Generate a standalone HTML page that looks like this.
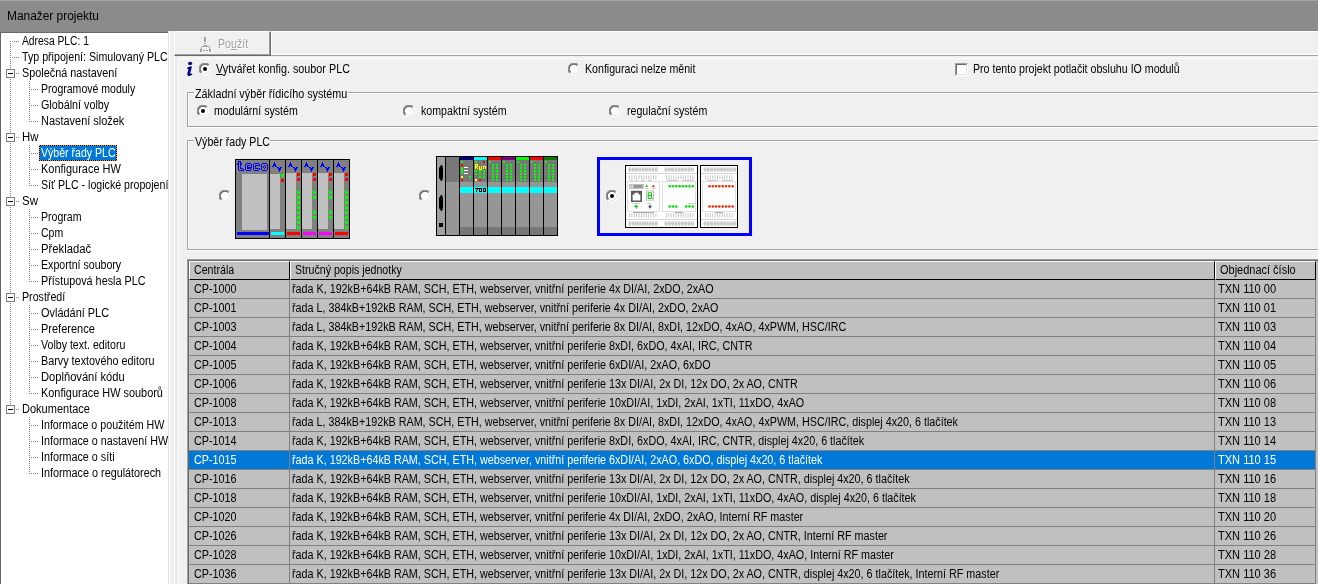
<!DOCTYPE html>
<html><head><meta charset="utf-8"><title>Manažer projektu</title>
<style>
html,body{margin:0;padding:0;}
body{width:1318px;height:584px;overflow:hidden;background:#f0f0f0;position:relative;font-family:"Liberation Sans",sans-serif;font-size:12px;color:#000;}
.a{position:absolute;}
.t{position:absolute;white-space:nowrap;line-height:13px;height:13px;transform:scaleX(0.885);transform-origin:0 0;}
#title{left:0;top:0;width:1318px;height:31px;background:#8b8b8b;}
#title .cap{position:absolute;left:7px;top:9px;font-size:12px;line-height:14px;letter-spacing:0;white-space:nowrap;transform:scaleX(0.992);transform-origin:0 0;}
#tree{left:0;top:32px;width:167px;height:552px;background:#fff;border-left:1px solid #646464;border-top:1px solid #696969;overflow:hidden;}
.dv{position:absolute;width:1px;background:repeating-linear-gradient(to bottom,#808080 0,#808080 1px,transparent 1px,transparent 2px);}
.dh{position:absolute;height:1px;background:repeating-linear-gradient(to right,#808080 0,#808080 1px,transparent 1px,transparent 2px);}
.box{position:absolute;width:7px;height:7px;border:1px solid #808080;background:#fff;}
.box i{position:absolute;left:1px;top:3px;width:5px;height:1px;background:#000;}
.s90{transform:scaleX(0.899)}.s92{transform:scaleX(0.90)}.s93{transform:scaleX(0.92)}.s915{transform:scaleX(0.915)}.s897{transform:scaleX(0.896)}
.hl{position:absolute;height:1px;}
.vl{position:absolute;width:1px;}
.radio{position:absolute;width:12px;height:12px;}
#grid{left:187px;top:259px;width:1131px;height:325px;background:#c0c0c0;overflow:hidden;}
.gh{position:absolute;top:2px;height:19px;background:#c0c0c0;border-left:1px solid #fff;border-top:1px solid #fff;border-right:1px solid #000;border-bottom:1px solid #000;box-sizing:border-box;}
.row{position:absolute;left:2px;width:1127px;height:18px;border-bottom:1px solid #808080;}
.row.sel{background:#0078d7;color:#fff;}
.c{position:absolute;top:0;height:18px;border-right:1px solid #808080;}
.row .t{top:3px;}
</style></head><body>

<div id="title" class="a"><div class="a" style="left:0;top:0;width:1318px;height:1px;background:#a3a3a3"></div><div class="cap">Manažer projektu</div></div>
<div class="a" style="left:0;top:31px;width:168px;height:1px;background:#8b8b8b"></div>
<div id="tree" class="a">
<div class="dv" style="left:9px;top:8px;height:369px"></div>
<div class="dh" style="left:11px;top:8px;width:7px"></div>
<div class="t" style="left:21px;top:2px;transform:scaleX(0.8581)">Adresa PLC: 1</div>
<div class="dh" style="left:11px;top:24px;width:7px"></div>
<div class="t" style="left:21px;top:18px;transform:scaleX(0.8881)">Typ připojení: Simulovaný PLC</div>
<div class="dh" style="left:15px;top:40px;width:4px"></div>
<div class="box" style="left:5px;top:36px"><i></i></div>
<div class="t" style="left:21px;top:34px;transform:scaleX(0.9033)">Společná nastavení</div>
<div class="dh" style="left:30px;top:56px;width:7px"></div>
<div class="t" style="left:40px;top:50px;transform:scaleX(0.8775)">Programové moduly</div>
<div class="dh" style="left:30px;top:72px;width:7px"></div>
<div class="t" style="left:40px;top:66px;transform:scaleX(0.897)">Globální volby</div>
<div class="dh" style="left:30px;top:88px;width:7px"></div>
<div class="t" style="left:40px;top:82px;transform:scaleX(0.9119)">Nastavení složek</div>
<div class="dh" style="left:15px;top:104px;width:4px"></div>
<div class="box" style="left:5px;top:100px"><i></i></div>
<div class="t" style="left:21px;top:98px;transform:scaleX(0.947)">Hw</div>
<div class="dh" style="left:30px;top:120px;width:7px"></div>
<div class="a" style="left:38px;top:112px;width:78px;height:16px;background:#0078d7"><div class="a" style="left:0;top:0;width:78px;height:1px;background:repeating-linear-gradient(90deg,#ff8728 0 1px,#000 1px 2px)"></div><div class="a" style="left:0;top:15px;width:78px;height:1px;background:repeating-linear-gradient(90deg,#000 0 1px,#ff8728 1px 2px)"></div><div class="a" style="left:0;top:0;width:1px;height:16px;background:repeating-linear-gradient(180deg,#ff8728 0 1px,#000 1px 2px)"></div><div class="a" style="left:77px;top:0;width:1px;height:16px;background:repeating-linear-gradient(180deg,#000 0 1px,#ff8728 1px 2px)"></div></div>
<div class="t" style="left:40px;top:114px;color:#fff;transform:scaleX(0.881)">Výběr řady PLC</div>
<div class="dh" style="left:30px;top:136px;width:7px"></div>
<div class="t" style="left:40px;top:130px;transform:scaleX(0.913)">Konfigurace HW</div>
<div class="dh" style="left:30px;top:152px;width:7px"></div>
<div class="t" style="left:40px;top:146px;transform:scaleX(0.885)">Síť PLC - logické propojení</div>
<div class="dh" style="left:15px;top:168px;width:4px"></div>
<div class="box" style="left:5px;top:164px"><i></i></div>
<div class="t" style="left:21px;top:162px;transform:scaleX(0.9558)">Sw</div>
<div class="dh" style="left:30px;top:184px;width:7px"></div>
<div class="t" style="left:40px;top:178px;transform:scaleX(0.8805)">Program</div>
<div class="dh" style="left:30px;top:200px;width:7px"></div>
<div class="t" style="left:40px;top:194px;transform:scaleX(0.8766)">Cpm</div>
<div class="dh" style="left:30px;top:216px;width:7px"></div>
<div class="t" style="left:40px;top:210px;transform:scaleX(0.9389)">Překladač</div>
<div class="dh" style="left:30px;top:232px;width:7px"></div>
<div class="t" style="left:40px;top:226px;transform:scaleX(0.8838)">Exportní soubory</div>
<div class="dh" style="left:30px;top:248px;width:7px"></div>
<div class="t" style="left:40px;top:242px;transform:scaleX(0.8999)">Přístupová hesla PLC</div>
<div class="dh" style="left:15px;top:264px;width:4px"></div>
<div class="box" style="left:5px;top:260px"><i></i></div>
<div class="t" style="left:21px;top:258px;transform:scaleX(0.8871)">Prostředí</div>
<div class="dh" style="left:30px;top:280px;width:7px"></div>
<div class="t" style="left:40px;top:274px;transform:scaleX(0.9113)">Ovládání PLC</div>
<div class="dh" style="left:30px;top:296px;width:7px"></div>
<div class="t" style="left:40px;top:290px;transform:scaleX(0.9169)">Preference</div>
<div class="dh" style="left:30px;top:312px;width:7px"></div>
<div class="t" style="left:40px;top:306px;transform:scaleX(0.8839)">Volby text. editoru</div>
<div class="dh" style="left:30px;top:328px;width:7px"></div>
<div class="t" style="left:40px;top:322px;transform:scaleX(0.9003)">Barvy textového editoru</div>
<div class="dh" style="left:30px;top:344px;width:7px"></div>
<div class="t" style="left:40px;top:338px;transform:scaleX(0.9293)">Doplňování kódu</div>
<div class="dh" style="left:30px;top:360px;width:7px"></div>
<div class="t" style="left:40px;top:354px;transform:scaleX(0.9092)">Konfigurace HW souborů</div>
<div class="dh" style="left:15px;top:376px;width:4px"></div>
<div class="box" style="left:5px;top:372px"><i></i></div>
<div class="t" style="left:21px;top:370px;transform:scaleX(0.9182)">Dokumentace</div>
<div class="dh" style="left:30px;top:392px;width:7px"></div>
<div class="t" style="left:40px;top:386px;transform:scaleX(0.8886)">Informace o použitém HW</div>
<div class="dh" style="left:30px;top:408px;width:7px"></div>
<div class="t" style="left:40px;top:402px;transform:scaleX(0.8949)">Informace o nastavení HW</div>
<div class="dh" style="left:30px;top:424px;width:7px"></div>
<div class="t" style="left:40px;top:418px;transform:scaleX(0.8962)">Informace o síti</div>
<div class="dh" style="left:30px;top:440px;width:7px"></div>
<div class="t" style="left:40px;top:434px;transform:scaleX(0.9002)">Informace o regulátorech</div>
<div class="dv" style="left:28px;top:48px;height:41px"></div>
<div class="dv" style="left:28px;top:112px;height:41px"></div>
<div class="dv" style="left:28px;top:176px;height:73px"></div>
<div class="dv" style="left:28px;top:272px;height:89px"></div>
<div class="dv" style="left:28px;top:384px;height:57px"></div>
</div>
<div class="a" style="left:168px;top:31px;width:1px;height:553px;background:#e3e3e3"></div>
<div class="a" style="left:169px;top:31px;width:1px;height:553px;background:#fff"></div>
<div class="a" style="left:174px;top:31px;width:97px;height:25px;box-sizing:border-box;border-left:1px solid #fff;border-top:1px solid #fff;border-right:1px solid #696969;border-bottom:1px solid #696969;background:#f0f0f0"><div class="a" style="left:0;top:0;width:94px;height:22px;border-right:1px solid #a0a0a0;border-bottom:1px solid #a0a0a0"></div></div>
<svg class="a" style="left:199px;top:36px" width="14" height="18" viewBox="0 0 14 18" shape-rendering="crispEdges"><g fill="#fff" transform="translate(1,1)"><rect x="5" y="1" width="2" height="5"/><rect x="5" y="7" width="2" height="1"/><rect x="5" y="9" width="3" height="1"/><rect x="3" y="10" width="7" height="1"/><rect x="2" y="11" width="1" height="2"/><rect x="10" y="11" width="1" height="2"/><rect x="1" y="13" width="2" height="3"/><rect x="10" y="13" width="2" height="3"/><rect x="4" y="14" width="2" height="1"/><rect x="7" y="14" width="2" height="1"/></g><g fill="#a0a0a0"><rect x="5" y="1" width="2" height="5"/><rect x="5" y="7" width="2" height="1"/><rect x="5" y="9" width="3" height="1"/><rect x="3" y="10" width="7" height="1"/><rect x="2" y="11" width="1" height="2"/><rect x="10" y="11" width="1" height="2"/><rect x="1" y="13" width="2" height="3"/><rect x="10" y="13" width="2" height="3"/><rect x="4" y="14" width="2" height="1"/><rect x="7" y="14" width="2" height="1"/></g></svg>
<div class="t" style="left:218px;top:38px;color:#a0a0a0;text-shadow:1px 1px 0 #fff">Po<u>u</u>žít</div>
<div class="hl" style="left:271px;top:55px;width:1047px;background:#a0a0a0"></div>
<div class="hl" style="left:271px;top:54px;width:1047px;background:#fff"></div>
<div class="vl" style="left:271px;top:31px;height:24px;background:#fff"></div>
<div class="hl" style="left:271px;top:31px;width:1047px;background:#fff"></div>
<div class="hl" style="left:178px;top:58px;width:1140px;background:#fff"></div>
<div class="vl" style="left:174px;top:56px;height:528px;background:#fff"></div>
<div class="a" style="left:175px;top:56px;width:3px;height:528px;background:#ececec"></div>
<div class="vl" style="left:178px;top:58px;height:526px;background:#fff"></div>
<svg class="a" style="left:185px;top:60px" width="10" height="18" viewBox="185 60 10 18"><ellipse cx="190.1" cy="63.4" rx="2.1" ry="1.55" fill="#000080"/><path d="M186.9 68.3 C187.6 66.9 189.6 66.4 192.0 66.6 L190.3 72.8 C190.1 73.9 190.7 74.2 192.1 73.3 L192.3 74.3 C191.0 76.1 188.0 76.7 187.4 74.7 C187.1 73.6 187.6 72.6 188.2 70.6 C188.6 69.2 188.5 68.3 187.0 68.8 Z" fill="#000080"/></svg>
<svg class="radio" style="left:199px;top:63px" viewBox="0 0 12 12"><circle cx="6" cy="6" r="5.5" fill="#fff"/><path d="M1.9 10.1 A5.5 5.5 0 0 1 10.1 1.9" fill="none" stroke="#8c8c8c" stroke-width="1.1"/><path d="M2.7 9.3 A4.5 4.5 0 0 1 9.3 2.7" fill="none" stroke="#5a5a5a" stroke-width="1.1"/><path d="M10.1 1.9 A5.5 5.5 0 0 1 1.9 10.1" fill="none" stroke="#fff" stroke-width="1"/><path d="M9.3 2.7 A4.5 4.5 0 0 1 2.7 9.3" fill="none" stroke="#e3e3e3" stroke-width="1"/><circle cx="6" cy="6" r="2" fill="#000"/></svg>
<div class="t s90" style="left:216px;top:63px"><u>V</u>ytvářet konfig. soubor PLC</div>
<svg class="radio" style="left:568px;top:63px" viewBox="0 0 12 12"><circle cx="6" cy="6" r="5.5" fill="#fff"/><path d="M1.9 10.1 A5.5 5.5 0 0 1 10.1 1.9" fill="none" stroke="#8c8c8c" stroke-width="1.1"/><path d="M2.7 9.3 A4.5 4.5 0 0 1 9.3 2.7" fill="none" stroke="#5a5a5a" stroke-width="1.1"/><path d="M10.1 1.9 A5.5 5.5 0 0 1 1.9 10.1" fill="none" stroke="#fff" stroke-width="1"/><path d="M9.3 2.7 A4.5 4.5 0 0 1 2.7 9.3" fill="none" stroke="#e3e3e3" stroke-width="1"/></svg>
<div class="t" style="left:585px;top:63px">Konfiguraci nelze měnit</div>
<div class="a" style="left:955px;top:63px;width:13px;height:13px;box-sizing:border-box;background:#fff;border-left:1px solid #a0a0a0;border-top:1px solid #a0a0a0;border-right:1px solid #fff;border-bottom:1px solid #fff"><div class="a" style="left:0;top:0;width:9px;height:9px;border-left:1px solid #696969;border-top:1px solid #696969;border-right:1px solid #e3e3e3;border-bottom:1px solid #e3e3e3"></div></div>
<div class="t" style="left:973px;top:63px">Pro tento projekt potlačit obsluhu IO modulů</div>
<div class="a" style="left:187px;top:92px;width:1133px;height:35px;box-sizing:border-box;border:1px solid #a0a0a0;border-right:none"></div><div class="a" style="left:188px;top:93px;width:1131px;height:33px;box-sizing:border-box;border:1px solid #fff;border-right:none;border-bottom:none"></div><div class="hl" style="left:187px;top:127px;width:1131px;background:#fff"></div><div class="a" style="left:194px;top:86px;width:154px;height:13px;background:#f0f0f0"></div><div class="t s90" style="left:195px;top:88px">Základní výběr řídicího systému</div>
<svg class="radio" style="left:197px;top:105px" viewBox="0 0 12 12"><circle cx="6" cy="6" r="5.5" fill="#fff"/><path d="M1.9 10.1 A5.5 5.5 0 0 1 10.1 1.9" fill="none" stroke="#8c8c8c" stroke-width="1.1"/><path d="M2.7 9.3 A4.5 4.5 0 0 1 9.3 2.7" fill="none" stroke="#5a5a5a" stroke-width="1.1"/><path d="M10.1 1.9 A5.5 5.5 0 0 1 1.9 10.1" fill="none" stroke="#fff" stroke-width="1"/><path d="M9.3 2.7 A4.5 4.5 0 0 1 2.7 9.3" fill="none" stroke="#e3e3e3" stroke-width="1"/><circle cx="6" cy="6" r="2" fill="#000"/></svg>
<div class="t" style="left:214px;top:105px">modulární systém</div>
<svg class="radio" style="left:403px;top:105px" viewBox="0 0 12 12"><circle cx="6" cy="6" r="5.5" fill="#fff"/><path d="M1.9 10.1 A5.5 5.5 0 0 1 10.1 1.9" fill="none" stroke="#8c8c8c" stroke-width="1.1"/><path d="M2.7 9.3 A4.5 4.5 0 0 1 9.3 2.7" fill="none" stroke="#5a5a5a" stroke-width="1.1"/><path d="M10.1 1.9 A5.5 5.5 0 0 1 1.9 10.1" fill="none" stroke="#fff" stroke-width="1"/><path d="M9.3 2.7 A4.5 4.5 0 0 1 2.7 9.3" fill="none" stroke="#e3e3e3" stroke-width="1"/></svg>
<div class="t" style="left:421px;top:105px">kompaktní systém</div>
<svg class="radio" style="left:609px;top:105px" viewBox="0 0 12 12"><circle cx="6" cy="6" r="5.5" fill="#fff"/><path d="M1.9 10.1 A5.5 5.5 0 0 1 10.1 1.9" fill="none" stroke="#8c8c8c" stroke-width="1.1"/><path d="M2.7 9.3 A4.5 4.5 0 0 1 9.3 2.7" fill="none" stroke="#5a5a5a" stroke-width="1.1"/><path d="M10.1 1.9 A5.5 5.5 0 0 1 1.9 10.1" fill="none" stroke="#fff" stroke-width="1"/><path d="M9.3 2.7 A4.5 4.5 0 0 1 2.7 9.3" fill="none" stroke="#e3e3e3" stroke-width="1"/></svg>
<div class="t" style="left:627px;top:105px">regulační systém</div>
<div class="a" style="left:187px;top:140px;width:1133px;height:110px;box-sizing:border-box;border:1px solid #a0a0a0;border-right:none"></div><div class="a" style="left:188px;top:141px;width:1131px;height:108px;box-sizing:border-box;border:1px solid #fff;border-right:none;border-bottom:none"></div><div class="hl" style="left:187px;top:250px;width:1131px;background:#fff"></div><div class="a" style="left:194px;top:134px;width:76px;height:13px;background:#f0f0f0"></div><div class="t" style="left:195px;top:136px">Výběr řady PLC</div>
<svg class="radio" style="left:219px;top:190px" viewBox="0 0 12 12"><circle cx="6" cy="6" r="5.5" fill="#fff"/><path d="M1.9 10.1 A5.5 5.5 0 0 1 10.1 1.9" fill="none" stroke="#8c8c8c" stroke-width="1.1"/><path d="M2.7 9.3 A4.5 4.5 0 0 1 9.3 2.7" fill="none" stroke="#5a5a5a" stroke-width="1.1"/><path d="M10.1 1.9 A5.5 5.5 0 0 1 1.9 10.1" fill="none" stroke="#fff" stroke-width="1"/><path d="M9.3 2.7 A4.5 4.5 0 0 1 2.7 9.3" fill="none" stroke="#e3e3e3" stroke-width="1"/></svg>
<svg class="radio" style="left:419px;top:190px" viewBox="0 0 12 12"><circle cx="6" cy="6" r="5.5" fill="#fff"/><path d="M1.9 10.1 A5.5 5.5 0 0 1 10.1 1.9" fill="none" stroke="#8c8c8c" stroke-width="1.1"/><path d="M2.7 9.3 A4.5 4.5 0 0 1 9.3 2.7" fill="none" stroke="#5a5a5a" stroke-width="1.1"/><path d="M10.1 1.9 A5.5 5.5 0 0 1 1.9 10.1" fill="none" stroke="#fff" stroke-width="1"/><path d="M9.3 2.7 A4.5 4.5 0 0 1 2.7 9.3" fill="none" stroke="#e3e3e3" stroke-width="1"/></svg>
<svg class="radio" style="left:606px;top:190px" viewBox="0 0 12 12"><circle cx="6" cy="6" r="5.5" fill="#fff"/><path d="M1.9 10.1 A5.5 5.5 0 0 1 10.1 1.9" fill="none" stroke="#8c8c8c" stroke-width="1.1"/><path d="M2.7 9.3 A4.5 4.5 0 0 1 9.3 2.7" fill="none" stroke="#5a5a5a" stroke-width="1.1"/><path d="M10.1 1.9 A5.5 5.5 0 0 1 1.9 10.1" fill="none" stroke="#fff" stroke-width="1"/><path d="M9.3 2.7 A4.5 4.5 0 0 1 2.7 9.3" fill="none" stroke="#e3e3e3" stroke-width="1"/><circle cx="6" cy="6" r="2" fill="#000"/></svg>
<svg class="a" style="left:235px;top:159px" width="115" height="80" viewBox="0 0 115 80" shape-rendering="crispEdges"><rect x="0" y="0" width="115" height="80" fill="#000"/><rect x="1" y="1" width="33" height="78" fill="#808080"/><rect x="7" y="15" width="25" height="56" fill="#c0c0c0"/><rect x="2" y="73" width="32" height="3" fill="#0000ff"/><rect x="3" y="2" width="3" height="1" fill="#0000ff"/><rect x="3" y="3" width="1" height="1" fill="#0000ff"/><rect x="5" y="3" width="1" height="1" fill="#0000ff"/><rect x="2" y="4" width="2" height="1" fill="#0000ff"/><rect x="5" y="4" width="2" height="1" fill="#0000ff"/><rect x="2" y="5" width="2" height="1" fill="#0000ff"/><rect x="5" y="5" width="2" height="1" fill="#0000ff"/><rect x="3" y="6" width="1" height="1" fill="#0000ff"/><rect x="5" y="6" width="1" height="1" fill="#0000ff"/><rect x="3" y="7" width="1" height="1" fill="#0000ff"/><rect x="5" y="7" width="1" height="1" fill="#0000ff"/><rect x="3" y="8" width="1" height="1" fill="#0000ff"/><rect x="5" y="8" width="1" height="1" fill="#0000ff"/><rect x="3" y="9" width="1" height="1" fill="#0000ff"/><rect x="5" y="9" width="3" height="1" fill="#0000ff"/><rect x="3" y="10" width="1" height="1" fill="#0000ff"/><rect x="8" y="10" width="1" height="1" fill="#0000ff"/><rect x="4" y="11" width="5" height="1" fill="#0000ff"/><rect x="11" y="4" width="5" height="1" fill="#0000ff"/><rect x="10" y="5" width="1" height="1" fill="#0000ff"/><rect x="16" y="5" width="1" height="1" fill="#0000ff"/><rect x="10" y="6" width="1" height="1" fill="#0000ff"/><rect x="12" y="6" width="3" height="1" fill="#0000ff"/><rect x="16" y="6" width="1" height="1" fill="#0000ff"/><rect x="10" y="7" width="1" height="1" fill="#0000ff"/><rect x="12" y="7" width="1" height="1" fill="#0000ff"/><rect x="16" y="7" width="1" height="1" fill="#0000ff"/><rect x="10" y="8" width="1" height="1" fill="#0000ff"/><rect x="12" y="8" width="5" height="1" fill="#0000ff"/><rect x="10" y="9" width="1" height="1" fill="#0000ff"/><rect x="12" y="9" width="4" height="1" fill="#0000ff"/><rect x="10" y="10" width="1" height="1" fill="#0000ff"/><rect x="16" y="10" width="1" height="1" fill="#0000ff"/><rect x="11" y="11" width="5" height="1" fill="#0000ff"/><rect x="19" y="4" width="5" height="1" fill="#0000ff"/><rect x="18" y="5" width="1" height="1" fill="#0000ff"/><rect x="24" y="5" width="1" height="1" fill="#0000ff"/><rect x="18" y="6" width="1" height="1" fill="#0000ff"/><rect x="20" y="6" width="5" height="1" fill="#0000ff"/><rect x="18" y="7" width="1" height="1" fill="#0000ff"/><rect x="20" y="7" width="1" height="1" fill="#0000ff"/><rect x="18" y="8" width="1" height="1" fill="#0000ff"/><rect x="20" y="8" width="1" height="1" fill="#0000ff"/><rect x="18" y="9" width="1" height="1" fill="#0000ff"/><rect x="20" y="9" width="5" height="1" fill="#0000ff"/><rect x="18" y="10" width="1" height="1" fill="#0000ff"/><rect x="24" y="10" width="1" height="1" fill="#0000ff"/><rect x="19" y="11" width="5" height="1" fill="#0000ff"/><rect x="27" y="4" width="5" height="1" fill="#0000ff"/><rect x="26" y="5" width="1" height="1" fill="#0000ff"/><rect x="32" y="5" width="1" height="1" fill="#0000ff"/><rect x="26" y="6" width="1" height="1" fill="#0000ff"/><rect x="29" y="6" width="1" height="1" fill="#0000ff"/><rect x="32" y="6" width="1" height="1" fill="#0000ff"/><rect x="26" y="7" width="1" height="1" fill="#0000ff"/><rect x="28" y="7" width="1" height="1" fill="#0000ff"/><rect x="30" y="7" width="1" height="1" fill="#0000ff"/><rect x="32" y="7" width="1" height="1" fill="#0000ff"/><rect x="26" y="8" width="1" height="1" fill="#0000ff"/><rect x="28" y="8" width="1" height="1" fill="#0000ff"/><rect x="30" y="8" width="1" height="1" fill="#0000ff"/><rect x="32" y="8" width="1" height="1" fill="#0000ff"/><rect x="26" y="9" width="1" height="1" fill="#0000ff"/><rect x="29" y="9" width="1" height="1" fill="#0000ff"/><rect x="32" y="9" width="1" height="1" fill="#0000ff"/><rect x="26" y="10" width="1" height="1" fill="#0000ff"/><rect x="32" y="10" width="1" height="1" fill="#0000ff"/><rect x="27" y="11" width="5" height="1" fill="#0000ff"/><rect x="35" y="1" width="15" height="78" fill="#808080"/><rect x="35" y="15" width="10" height="55" fill="#c0c0c0"/><rect x="36" y="73" width="13" height="3" fill="#00ffff"/><rect x="46" y="15" width="3" height="3" fill="#00ff00"/><rect x="46" y="20" width="3" height="3" fill="#ff0000"/><rect x="39" y="3" width="1" height="1" fill="#0000ff"/><rect x="39" y="4" width="1" height="1" fill="#0000ff"/><rect x="38" y="5" width="3" height="1" fill="#0000ff"/><rect x="38" y="6" width="3" height="1" fill="#0000ff"/><rect x="37" y="7" width="2" height="1" fill="#0000ff"/><rect x="40" y="7" width="2" height="1" fill="#0000ff"/><rect x="42" y="8" width="2" height="1" fill="#0000ff"/><rect x="45" y="8" width="2" height="1" fill="#0000ff"/><rect x="43" y="9" width="3" height="1" fill="#0000ff"/><rect x="43" y="10" width="3" height="1" fill="#0000ff"/><rect x="44" y="11" width="1" height="1" fill="#0000ff"/><rect x="44" y="12" width="1" height="1" fill="#0000ff"/><rect x="51" y="1" width="15" height="78" fill="#808080"/><rect x="51" y="14" width="10" height="56" fill="#c0c0c0"/><rect x="52" y="73" width="13" height="3" fill="#ff0000"/><rect x="62" y="14" width="3" height="3" fill="#ff0000"/><rect x="62" y="19" width="3" height="3" fill="#ff0000"/><rect x="62" y="32" width="3" height="3" fill="#00ff00"/><rect x="62" y="37" width="3" height="3" fill="#00ff00"/><rect x="62" y="42" width="3" height="3" fill="#00ff00"/><rect x="62" y="47" width="3" height="3" fill="#00ff00"/><rect x="62" y="52" width="3" height="3" fill="#00ff00"/><rect x="62" y="57" width="3" height="3" fill="#00ff00"/><rect x="62" y="62" width="3" height="3" fill="#00ff00"/><rect x="62" y="67" width="3" height="3" fill="#00ff00"/><rect x="55" y="3" width="1" height="1" fill="#0000ff"/><rect x="55" y="4" width="1" height="1" fill="#0000ff"/><rect x="54" y="5" width="3" height="1" fill="#0000ff"/><rect x="54" y="6" width="3" height="1" fill="#0000ff"/><rect x="53" y="7" width="2" height="1" fill="#0000ff"/><rect x="56" y="7" width="2" height="1" fill="#0000ff"/><rect x="58" y="8" width="2" height="1" fill="#0000ff"/><rect x="61" y="8" width="2" height="1" fill="#0000ff"/><rect x="59" y="9" width="3" height="1" fill="#0000ff"/><rect x="59" y="10" width="3" height="1" fill="#0000ff"/><rect x="60" y="11" width="1" height="1" fill="#0000ff"/><rect x="60" y="12" width="1" height="1" fill="#0000ff"/><rect x="67" y="1" width="15" height="78" fill="#808080"/><rect x="67" y="14" width="10" height="56" fill="#c0c0c0"/><rect x="68" y="73" width="13" height="3" fill="#ff00ff"/><rect x="78" y="14" width="3" height="3" fill="#ff0000"/><rect x="78" y="19" width="3" height="3" fill="#ff0000"/><rect x="78" y="32" width="3" height="3" fill="#00ff00"/><rect x="78" y="37" width="3" height="3" fill="#00ff00"/><rect x="78" y="52" width="3" height="3" fill="#00ff00"/><rect x="78" y="57" width="3" height="3" fill="#00ff00"/><rect x="71" y="3" width="1" height="1" fill="#0000ff"/><rect x="71" y="4" width="1" height="1" fill="#0000ff"/><rect x="70" y="5" width="3" height="1" fill="#0000ff"/><rect x="70" y="6" width="3" height="1" fill="#0000ff"/><rect x="69" y="7" width="2" height="1" fill="#0000ff"/><rect x="72" y="7" width="2" height="1" fill="#0000ff"/><rect x="74" y="8" width="2" height="1" fill="#0000ff"/><rect x="77" y="8" width="2" height="1" fill="#0000ff"/><rect x="75" y="9" width="3" height="1" fill="#0000ff"/><rect x="75" y="10" width="3" height="1" fill="#0000ff"/><rect x="76" y="11" width="1" height="1" fill="#0000ff"/><rect x="76" y="12" width="1" height="1" fill="#0000ff"/><rect x="83" y="1" width="15" height="78" fill="#808080"/><rect x="83" y="14" width="10" height="56" fill="#c0c0c0"/><rect x="84" y="73" width="13" height="3" fill="#ff00ff"/><rect x="94" y="14" width="3" height="3" fill="#ff0000"/><rect x="94" y="19" width="3" height="3" fill="#ff0000"/><rect x="94" y="32" width="3" height="3" fill="#00ff00"/><rect x="94" y="37" width="3" height="3" fill="#00ff00"/><rect x="94" y="52" width="3" height="3" fill="#00ff00"/><rect x="94" y="57" width="3" height="3" fill="#00ff00"/><rect x="87" y="3" width="1" height="1" fill="#0000ff"/><rect x="87" y="4" width="1" height="1" fill="#0000ff"/><rect x="86" y="5" width="3" height="1" fill="#0000ff"/><rect x="86" y="6" width="3" height="1" fill="#0000ff"/><rect x="85" y="7" width="2" height="1" fill="#0000ff"/><rect x="88" y="7" width="2" height="1" fill="#0000ff"/><rect x="90" y="8" width="2" height="1" fill="#0000ff"/><rect x="93" y="8" width="2" height="1" fill="#0000ff"/><rect x="91" y="9" width="3" height="1" fill="#0000ff"/><rect x="91" y="10" width="3" height="1" fill="#0000ff"/><rect x="92" y="11" width="1" height="1" fill="#0000ff"/><rect x="92" y="12" width="1" height="1" fill="#0000ff"/><rect x="99" y="1" width="15" height="78" fill="#808080"/><rect x="99" y="14" width="10" height="56" fill="#c0c0c0"/><rect x="100" y="73" width="13" height="3" fill="#ff0000"/><rect x="110" y="14" width="3" height="3" fill="#ff0000"/><rect x="110" y="19" width="3" height="3" fill="#ff0000"/><rect x="110" y="32" width="3" height="3" fill="#00ff00"/><rect x="110" y="37" width="3" height="3" fill="#00ff00"/><rect x="110" y="42" width="3" height="3" fill="#00ff00"/><rect x="110" y="47" width="3" height="3" fill="#00ff00"/><rect x="110" y="52" width="3" height="3" fill="#00ff00"/><rect x="110" y="57" width="3" height="3" fill="#00ff00"/><rect x="110" y="62" width="3" height="3" fill="#00ff00"/><rect x="110" y="67" width="3" height="3" fill="#00ff00"/><rect x="103" y="3" width="1" height="1" fill="#0000ff"/><rect x="103" y="4" width="1" height="1" fill="#0000ff"/><rect x="102" y="5" width="3" height="1" fill="#0000ff"/><rect x="102" y="6" width="3" height="1" fill="#0000ff"/><rect x="101" y="7" width="2" height="1" fill="#0000ff"/><rect x="104" y="7" width="2" height="1" fill="#0000ff"/><rect x="106" y="8" width="2" height="1" fill="#0000ff"/><rect x="109" y="8" width="2" height="1" fill="#0000ff"/><rect x="107" y="9" width="3" height="1" fill="#0000ff"/><rect x="107" y="10" width="3" height="1" fill="#0000ff"/><rect x="108" y="11" width="1" height="1" fill="#0000ff"/><rect x="108" y="12" width="1" height="1" fill="#0000ff"/></svg>
<svg class="a" style="left:436px;top:156px" width="122" height="80" viewBox="0 0 122 80" shape-rendering="crispEdges"><rect width="122" height="80" fill="#000"/><rect x="1" y="1" width="8" height="78" fill="#a0a0a0"/><path d="M3 12 l2 -3 h1 l1 3 v10 l-1 3 h-1 l-2 -3 z M3 42 l2 -3 h1 l1 3 v10 l-1 3 h-1 l-2 -3 z" fill="#000" shape-rendering="auto"/><rect x="3" y="67" width="4" height="4" fill="#000"/><rect x="10" y="1" width="13" height="25" fill="#787878"/><rect x="10" y="26" width="13" height="53" fill="#969696"/><rect x="24" y="1" width="13" height="3" fill="#000080"/><rect x="24" y="4" width="13" height="22" fill="#787878"/><rect x="24" y="26" width="13" height="5" fill="#969696"/><rect x="24" y="31" width="13" height="6" fill="#00ffff"/><rect x="24" y="37" width="13" height="34" fill="#969696"/><rect x="24" y="71" width="13" height="8" fill="#787878"/><rect x="25" y="5" width="2" height="2" fill="#00ff00"/><rect x="25" y="8" width="2" height="3" fill="#ff0000"/><rect x="25" y="11" width="2" height="7" fill="#00ff00"/><rect x="25" y="20" width="2" height="2" fill="#ffff00"/><rect x="25" y="23" width="2" height="2" fill="#ff0000"/><rect x="33" y="20" width="2" height="2" fill="#00ff00"/><rect x="28" y="11" width="4" height="1" fill="#ffffff"/><rect x="28" y="14" width="4" height="1" fill="#ffffff"/><rect x="28" y="17" width="4" height="1" fill="#ffffff"/><rect x="38" y="1" width="13" height="3" fill="#00ffff"/><rect x="38" y="4" width="13" height="22" fill="#787878"/><rect x="38" y="26" width="13" height="5" fill="#969696"/><rect x="38" y="31" width="13" height="6" fill="#00ffff"/><rect x="38" y="37" width="13" height="34" fill="#969696"/><rect x="38" y="71" width="13" height="8" fill="#787878"/><rect x="39" y="5" width="2" height="2" fill="#00ff00"/><rect x="47" y="5" width="2" height="2" fill="#ff0000"/><rect x="39" y="14" width="2" height="2" fill="#00ff00"/><rect x="43" y="14" width="2" height="2" fill="#00ff00"/><rect x="47" y="14" width="2" height="2" fill="#00ff00"/><rect x="39" y="17" width="2" height="2" fill="#00ff00"/><rect x="43" y="17" width="2" height="2" fill="#00ff00"/><rect x="47" y="17" width="2" height="2" fill="#00ff00"/><rect x="43" y="20" width="2" height="2" fill="#00ff00"/><rect x="47" y="20" width="2" height="2" fill="#00ff00"/><rect x="39" y="23" width="2" height="2" fill="#ffff00"/><rect x="43" y="23" width="2" height="2" fill="#ff0000"/><path d="M39.5 13 v-5 h2 v2 h-2 l2 3 M43.5 10 v3 h2 v-3 M47.5 13 v-3 h2 v3" fill="none" stroke="#ffff00" stroke-width="1"/><path d="M39 32.5 h3 l-2 3 M43.5 32.5 h2 v3 h-2 z M47.5 32.5 h2 v3 h-2 z" fill="none" stroke="#000" stroke-width="1"/><rect x="52" y="1" width="13" height="3" fill="#ff0000"/><rect x="52" y="4" width="13" height="22" fill="#787878"/><rect x="52" y="26" width="13" height="5" fill="#969696"/><rect x="52" y="31" width="13" height="6" fill="#00ffff"/><rect x="52" y="37" width="13" height="34" fill="#969696"/><rect x="52" y="71" width="13" height="8" fill="#787878"/><rect x="53" y="5" width="2" height="2" fill="#00ff00"/><rect x="56" y="8" width="2" height="2" fill="#00ff00"/><rect x="60" y="8" width="2" height="2" fill="#00ff00"/><rect x="56" y="11" width="2" height="2" fill="#00ff00"/><rect x="60" y="11" width="2" height="2" fill="#00ff00"/><rect x="56" y="14" width="2" height="2" fill="#00ff00"/><rect x="60" y="14" width="2" height="2" fill="#00ff00"/><rect x="56" y="17" width="2" height="2" fill="#00ff00"/><rect x="60" y="17" width="2" height="2" fill="#00ff00"/><rect x="56" y="20" width="2" height="2" fill="#00ff00"/><rect x="60" y="20" width="2" height="2" fill="#00ff00"/><rect x="56" y="23" width="2" height="2" fill="#00ff00"/><rect x="60" y="23" width="2" height="2" fill="#00ff00"/><rect x="66" y="1" width="13" height="3" fill="#800080"/><rect x="66" y="4" width="13" height="22" fill="#787878"/><rect x="66" y="26" width="13" height="5" fill="#969696"/><rect x="66" y="31" width="13" height="6" fill="#00ffff"/><rect x="66" y="37" width="13" height="34" fill="#969696"/><rect x="66" y="71" width="13" height="8" fill="#787878"/><rect x="67" y="5" width="2" height="2" fill="#00ff00"/><rect x="70" y="8" width="2" height="2" fill="#00ff00"/><rect x="74" y="8" width="2" height="2" fill="#00ff00"/><rect x="70" y="11" width="2" height="2" fill="#00ff00"/><rect x="74" y="11" width="2" height="2" fill="#00ff00"/><rect x="70" y="14" width="2" height="2" fill="#00ff00"/><rect x="74" y="14" width="2" height="2" fill="#00ff00"/><rect x="70" y="17" width="2" height="2" fill="#00ff00"/><rect x="74" y="17" width="2" height="2" fill="#00ff00"/><rect x="70" y="20" width="2" height="2" fill="#00ff00"/><rect x="74" y="20" width="2" height="2" fill="#00ff00"/><rect x="70" y="23" width="2" height="2" fill="#00ff00"/><rect x="74" y="23" width="2" height="2" fill="#00ff00"/><rect x="80" y="1" width="13" height="3" fill="#00ff00"/><rect x="80" y="4" width="13" height="22" fill="#787878"/><rect x="80" y="26" width="13" height="5" fill="#969696"/><rect x="80" y="31" width="13" height="6" fill="#00ffff"/><rect x="80" y="37" width="13" height="34" fill="#969696"/><rect x="80" y="71" width="13" height="8" fill="#787878"/><rect x="81" y="5" width="2" height="2" fill="#00ff00"/><rect x="84" y="8" width="2" height="2" fill="#00ff00"/><rect x="88" y="8" width="2" height="2" fill="#00ff00"/><rect x="84" y="11" width="2" height="2" fill="#00ff00"/><rect x="88" y="11" width="2" height="2" fill="#00ff00"/><rect x="84" y="14" width="2" height="2" fill="#00ff00"/><rect x="88" y="14" width="2" height="2" fill="#00ff00"/><rect x="84" y="17" width="2" height="2" fill="#00ff00"/><rect x="88" y="17" width="2" height="2" fill="#00ff00"/><rect x="84" y="20" width="2" height="2" fill="#00ff00"/><rect x="88" y="20" width="2" height="2" fill="#00ff00"/><rect x="84" y="23" width="2" height="2" fill="#00ff00"/><rect x="88" y="23" width="2" height="2" fill="#00ff00"/><rect x="94" y="1" width="13" height="3" fill="#ff0000"/><rect x="94" y="4" width="13" height="22" fill="#787878"/><rect x="94" y="26" width="13" height="5" fill="#969696"/><rect x="94" y="31" width="13" height="6" fill="#00ffff"/><rect x="94" y="37" width="13" height="34" fill="#969696"/><rect x="94" y="71" width="13" height="8" fill="#787878"/><rect x="95" y="5" width="2" height="2" fill="#00ff00"/><rect x="98" y="8" width="2" height="2" fill="#00ff00"/><rect x="102" y="8" width="2" height="2" fill="#00ff00"/><rect x="98" y="11" width="2" height="2" fill="#00ff00"/><rect x="102" y="11" width="2" height="2" fill="#00ff00"/><rect x="98" y="14" width="2" height="2" fill="#00ff00"/><rect x="102" y="14" width="2" height="2" fill="#00ff00"/><rect x="98" y="17" width="2" height="2" fill="#00ff00"/><rect x="102" y="17" width="2" height="2" fill="#00ff00"/><rect x="98" y="20" width="2" height="2" fill="#00ff00"/><rect x="102" y="20" width="2" height="2" fill="#00ff00"/><rect x="98" y="23" width="2" height="2" fill="#00ff00"/><rect x="102" y="23" width="2" height="2" fill="#00ff00"/><rect x="108" y="1" width="13" height="3" fill="#008000"/><rect x="108" y="4" width="13" height="22" fill="#787878"/><rect x="108" y="26" width="13" height="5" fill="#969696"/><rect x="108" y="31" width="13" height="6" fill="#00ffff"/><rect x="108" y="37" width="13" height="34" fill="#969696"/><rect x="108" y="71" width="13" height="8" fill="#787878"/><rect x="109" y="5" width="2" height="2" fill="#00ff00"/><rect x="112" y="8" width="2" height="2" fill="#00ff00"/><rect x="116" y="8" width="2" height="2" fill="#00ff00"/><rect x="112" y="11" width="2" height="2" fill="#00ff00"/><rect x="116" y="11" width="2" height="2" fill="#00ff00"/><rect x="112" y="14" width="2" height="2" fill="#00ff00"/><rect x="116" y="14" width="2" height="2" fill="#00ff00"/><rect x="112" y="17" width="2" height="2" fill="#00ff00"/><rect x="116" y="17" width="2" height="2" fill="#00ff00"/><rect x="112" y="20" width="2" height="2" fill="#00ff00"/><rect x="116" y="20" width="2" height="2" fill="#00ff00"/><rect x="112" y="23" width="2" height="2" fill="#00ff00"/><rect x="116" y="23" width="2" height="2" fill="#00ff00"/></svg>
<div class="a" style="left:597px;top:157px;width:155px;height:79px;box-sizing:border-box;border:3px solid #0000ff"></div><svg class="a" style="left:625px;top:165px" width="114" height="63" viewBox="0 0 114 63"><rect x="0.5" y="0.5" width="72" height="62" fill="#fff" stroke="#000" stroke-width="1"/><rect x="75.5" y="0.5" width="37" height="62" fill="#fff" stroke="#000" stroke-width="1"/><ellipse cx="5" cy="4.6" rx="1.55" ry="2.3" fill="#c4c4c4"/><rect x="4.65" y="2.3" width="0.7" height="4.6" fill="#dcdcdc"/><ellipse cx="8.3" cy="4.6" rx="1.55" ry="2.3" fill="#c4c4c4"/><rect x="7.95" y="2.3" width="0.7" height="4.6" fill="#dcdcdc"/><ellipse cx="11.6" cy="4.6" rx="1.55" ry="2.3" fill="#c4c4c4"/><rect x="11.25" y="2.3" width="0.7" height="4.6" fill="#dcdcdc"/><ellipse cx="14.9" cy="4.6" rx="1.55" ry="2.3" fill="#c4c4c4"/><rect x="14.55" y="2.3" width="0.7" height="4.6" fill="#dcdcdc"/><ellipse cx="18.2" cy="4.6" rx="1.55" ry="2.3" fill="#c4c4c4"/><rect x="17.85" y="2.3" width="0.7" height="4.6" fill="#dcdcdc"/><ellipse cx="21.5" cy="4.6" rx="1.55" ry="2.3" fill="#c4c4c4"/><rect x="21.15" y="2.3" width="0.7" height="4.6" fill="#dcdcdc"/><ellipse cx="24.8" cy="4.6" rx="1.55" ry="2.3" fill="#c4c4c4"/><rect x="24.45" y="2.3" width="0.7" height="4.6" fill="#dcdcdc"/><ellipse cx="28.1" cy="4.6" rx="1.55" ry="2.3" fill="#c4c4c4"/><rect x="27.75" y="2.3" width="0.7" height="4.6" fill="#dcdcdc"/><ellipse cx="31.4" cy="4.6" rx="1.55" ry="2.3" fill="#c4c4c4"/><rect x="31.05" y="2.3" width="0.7" height="4.6" fill="#dcdcdc"/><ellipse cx="41" cy="4.6" rx="1.55" ry="2.3" fill="#c4c4c4"/><rect x="40.65" y="2.3" width="0.7" height="4.6" fill="#dcdcdc"/><ellipse cx="44.3" cy="4.6" rx="1.55" ry="2.3" fill="#c4c4c4"/><rect x="43.95" y="2.3" width="0.7" height="4.6" fill="#dcdcdc"/><ellipse cx="47.6" cy="4.6" rx="1.55" ry="2.3" fill="#c4c4c4"/><rect x="47.25" y="2.3" width="0.7" height="4.6" fill="#dcdcdc"/><ellipse cx="50.9" cy="4.6" rx="1.55" ry="2.3" fill="#c4c4c4"/><rect x="50.55" y="2.3" width="0.7" height="4.6" fill="#dcdcdc"/><ellipse cx="54.2" cy="4.6" rx="1.55" ry="2.3" fill="#c4c4c4"/><rect x="53.85" y="2.3" width="0.7" height="4.6" fill="#dcdcdc"/><ellipse cx="57.5" cy="4.6" rx="1.55" ry="2.3" fill="#c4c4c4"/><rect x="57.15" y="2.3" width="0.7" height="4.6" fill="#dcdcdc"/><ellipse cx="60.8" cy="4.6" rx="1.55" ry="2.3" fill="#c4c4c4"/><rect x="60.45" y="2.3" width="0.7" height="4.6" fill="#dcdcdc"/><ellipse cx="64.1" cy="4.6" rx="1.55" ry="2.3" fill="#c4c4c4"/><rect x="63.75" y="2.3" width="0.7" height="4.6" fill="#dcdcdc"/><ellipse cx="67.4" cy="4.6" rx="1.55" ry="2.3" fill="#c4c4c4"/><rect x="67.05" y="2.3" width="0.7" height="4.6" fill="#dcdcdc"/><ellipse cx="80" cy="4.6" rx="1.55" ry="2.3" fill="#c4c4c4"/><rect x="79.65" y="2.3" width="0.7" height="4.6" fill="#dcdcdc"/><ellipse cx="83.3" cy="4.6" rx="1.55" ry="2.3" fill="#c4c4c4"/><rect x="82.95" y="2.3" width="0.7" height="4.6" fill="#dcdcdc"/><ellipse cx="86.6" cy="4.6" rx="1.55" ry="2.3" fill="#c4c4c4"/><rect x="86.25" y="2.3" width="0.7" height="4.6" fill="#dcdcdc"/><ellipse cx="89.9" cy="4.6" rx="1.55" ry="2.3" fill="#c4c4c4"/><rect x="89.55" y="2.3" width="0.7" height="4.6" fill="#dcdcdc"/><ellipse cx="93.2" cy="4.6" rx="1.55" ry="2.3" fill="#c4c4c4"/><rect x="92.85" y="2.3" width="0.7" height="4.6" fill="#dcdcdc"/><ellipse cx="96.5" cy="4.6" rx="1.55" ry="2.3" fill="#c4c4c4"/><rect x="96.15" y="2.3" width="0.7" height="4.6" fill="#dcdcdc"/><ellipse cx="99.8" cy="4.6" rx="1.55" ry="2.3" fill="#c4c4c4"/><rect x="99.45" y="2.3" width="0.7" height="4.6" fill="#dcdcdc"/><ellipse cx="103.1" cy="4.6" rx="1.55" ry="2.3" fill="#c4c4c4"/><rect x="102.75" y="2.3" width="0.7" height="4.6" fill="#dcdcdc"/><ellipse cx="106.4" cy="4.6" rx="1.55" ry="2.3" fill="#c4c4c4"/><rect x="106.05" y="2.3" width="0.7" height="4.6" fill="#dcdcdc"/><ellipse cx="109.7" cy="4.6" rx="1.55" ry="2.3" fill="#c4c4c4"/><rect x="109.35" y="2.3" width="0.7" height="4.6" fill="#dcdcdc"/><ellipse cx="5" cy="58.6" rx="1.55" ry="2.3" fill="#c4c4c4"/><rect x="4.65" y="56.3" width="0.7" height="4.6" fill="#dcdcdc"/><ellipse cx="8.3" cy="58.6" rx="1.55" ry="2.3" fill="#c4c4c4"/><rect x="7.95" y="56.3" width="0.7" height="4.6" fill="#dcdcdc"/><ellipse cx="11.6" cy="58.6" rx="1.55" ry="2.3" fill="#c4c4c4"/><rect x="11.25" y="56.3" width="0.7" height="4.6" fill="#dcdcdc"/><ellipse cx="14.9" cy="58.6" rx="1.55" ry="2.3" fill="#c4c4c4"/><rect x="14.55" y="56.3" width="0.7" height="4.6" fill="#dcdcdc"/><ellipse cx="18.2" cy="58.6" rx="1.55" ry="2.3" fill="#c4c4c4"/><rect x="17.85" y="56.3" width="0.7" height="4.6" fill="#dcdcdc"/><ellipse cx="21.5" cy="58.6" rx="1.55" ry="2.3" fill="#c4c4c4"/><rect x="21.15" y="56.3" width="0.7" height="4.6" fill="#dcdcdc"/><ellipse cx="24.8" cy="58.6" rx="1.55" ry="2.3" fill="#c4c4c4"/><rect x="24.45" y="56.3" width="0.7" height="4.6" fill="#dcdcdc"/><ellipse cx="28.1" cy="58.6" rx="1.55" ry="2.3" fill="#c4c4c4"/><rect x="27.75" y="56.3" width="0.7" height="4.6" fill="#dcdcdc"/><ellipse cx="31.4" cy="58.6" rx="1.55" ry="2.3" fill="#c4c4c4"/><rect x="31.05" y="56.3" width="0.7" height="4.6" fill="#dcdcdc"/><ellipse cx="41" cy="58.6" rx="1.55" ry="2.3" fill="#c4c4c4"/><rect x="40.65" y="56.3" width="0.7" height="4.6" fill="#dcdcdc"/><ellipse cx="44.3" cy="58.6" rx="1.55" ry="2.3" fill="#c4c4c4"/><rect x="43.95" y="56.3" width="0.7" height="4.6" fill="#dcdcdc"/><ellipse cx="47.6" cy="58.6" rx="1.55" ry="2.3" fill="#c4c4c4"/><rect x="47.25" y="56.3" width="0.7" height="4.6" fill="#dcdcdc"/><ellipse cx="50.9" cy="58.6" rx="1.55" ry="2.3" fill="#c4c4c4"/><rect x="50.55" y="56.3" width="0.7" height="4.6" fill="#dcdcdc"/><ellipse cx="54.2" cy="58.6" rx="1.55" ry="2.3" fill="#c4c4c4"/><rect x="53.85" y="56.3" width="0.7" height="4.6" fill="#dcdcdc"/><ellipse cx="57.5" cy="58.6" rx="1.55" ry="2.3" fill="#c4c4c4"/><rect x="57.15" y="56.3" width="0.7" height="4.6" fill="#dcdcdc"/><ellipse cx="60.8" cy="58.6" rx="1.55" ry="2.3" fill="#c4c4c4"/><rect x="60.45" y="56.3" width="0.7" height="4.6" fill="#dcdcdc"/><ellipse cx="64.1" cy="58.6" rx="1.55" ry="2.3" fill="#c4c4c4"/><rect x="63.75" y="56.3" width="0.7" height="4.6" fill="#dcdcdc"/><ellipse cx="67.4" cy="58.6" rx="1.55" ry="2.3" fill="#c4c4c4"/><rect x="67.05" y="56.3" width="0.7" height="4.6" fill="#dcdcdc"/><ellipse cx="80" cy="58.6" rx="1.55" ry="2.3" fill="#c4c4c4"/><rect x="79.65" y="56.3" width="0.7" height="4.6" fill="#dcdcdc"/><ellipse cx="83.3" cy="58.6" rx="1.55" ry="2.3" fill="#c4c4c4"/><rect x="82.95" y="56.3" width="0.7" height="4.6" fill="#dcdcdc"/><ellipse cx="86.6" cy="58.6" rx="1.55" ry="2.3" fill="#c4c4c4"/><rect x="86.25" y="56.3" width="0.7" height="4.6" fill="#dcdcdc"/><ellipse cx="89.9" cy="58.6" rx="1.55" ry="2.3" fill="#c4c4c4"/><rect x="89.55" y="56.3" width="0.7" height="4.6" fill="#dcdcdc"/><ellipse cx="93.2" cy="58.6" rx="1.55" ry="2.3" fill="#c4c4c4"/><rect x="92.85" y="56.3" width="0.7" height="4.6" fill="#dcdcdc"/><ellipse cx="96.5" cy="58.6" rx="1.55" ry="2.3" fill="#c4c4c4"/><rect x="96.15" y="56.3" width="0.7" height="4.6" fill="#dcdcdc"/><ellipse cx="99.8" cy="58.6" rx="1.55" ry="2.3" fill="#c4c4c4"/><rect x="99.45" y="56.3" width="0.7" height="4.6" fill="#dcdcdc"/><ellipse cx="103.1" cy="58.6" rx="1.55" ry="2.3" fill="#c4c4c4"/><rect x="102.75" y="56.3" width="0.7" height="4.6" fill="#dcdcdc"/><ellipse cx="106.4" cy="58.6" rx="1.55" ry="2.3" fill="#c4c4c4"/><rect x="106.05" y="56.3" width="0.7" height="4.6" fill="#dcdcdc"/><ellipse cx="109.7" cy="58.6" rx="1.55" ry="2.3" fill="#c4c4c4"/><rect x="109.35" y="56.3" width="0.7" height="4.6" fill="#dcdcdc"/><path d="M1 8.5 H72 M76 8.5 H112" stroke="#d4d4d4" stroke-width="1"/><path d="M1 54.5 H72 M76 54.5 H112" stroke="#d4d4d4" stroke-width="1"/><path d="M4 12.3 H33 M41 12.3 H70 M80 12.3 H109" stroke="#c4c4c4" stroke-width="4.2" stroke-dasharray="0.9 1.5"/><path d="M4 50.3 H33 M41 50.3 H70 M80 50.3 H109" stroke="#c4c4c4" stroke-width="4.2" stroke-dasharray="0.9 1.5"/><path d="M5 15.4 h3 M10 15.4 h3 M16 15.4 h4 M23 15.4 h4 M42 15.4 h11 M57 15.4 h12 M82 15.4 h11 M97 15.4 h11" stroke="#b0b0b0" stroke-width="0.7"/><path d="M8 47.6 h21 M50 47.6 h8 M90 47.6 h8" stroke="#8c8c8c" stroke-width="0.8"/><rect x="2.5" y="16.5" width="32" height="30" fill="#fff" stroke="#dedede"/><rect x="37.5" y="16.5" width="33" height="30" fill="#fff" stroke="#dedede"/><rect x="77.5" y="16.5" width="33" height="30" fill="#fff" stroke="#dedede"/><rect x="4.4" y="19.3" width="14" height="4.3" fill="#e8e8e8" stroke="#a0a0a0" stroke-width="0.6"/><rect x="8.3" y="20.1" width="9.3" height="2.7" fill="#909090"/><rect x="5.3" y="20.6" width="2" height="1.6" fill="#b0b0b0"/><path d="M21.6 19.4 l1.4 2.6 h-2.8 z" fill="#00d000"/><path d="M28.4 19.4 l1.4 2.6 h-2.8 z" fill="#ee2200"/><path d="M20.3 23.4 h2.8 M26.5 23.4 h4.2" stroke="#909090" stroke-width="0.6"/><rect x="6" y="25.8" width="11" height="11.2" fill="#585858"/><path d="M7.6 35.4 v-6 h1.9 v-1.6 h4 v1.6 h1.9 v6 z" fill="#fff"/><path d="M7.6 38.5 h7 M22.3 38.5 h3.8" stroke="#a0a0a0" stroke-width="0.6"/><rect x="21.5" y="25.9" width="7" height="9.2" fill="#fff" stroke="#b0b0b0" stroke-width="0.8"/><path d="M23.2 27.8 h3.2 v5.6 h-3.2 z M23.2 30.6 h3.2" fill="none" stroke="#00c000" stroke-width="1"/><rect x="27.2" y="33.2" width="0.8" height="0.8" fill="#00c000"/><path d="M9.2 41.5 h4 M11.2 39.6 v3.8" stroke="#00cc00" stroke-width="1.2"/><circle cx="25" cy="41.6" r="1.3" fill="#404040"/><circle cx="25" cy="41.6" r="2" fill="none" stroke="#c0c0c0" stroke-width="0.5"/><path d="M63.5 38.4 h6.5" stroke="#a8a8a8" stroke-width="0.6"/><path d="M43.45 21.2 h2.5 M44.7 19.95 v2.5" stroke="#00e000" stroke-width="1.35"/><path d="M46.75 21.2 h2.5 M48 19.95 v2.5" stroke="#00e000" stroke-width="1.35"/><path d="M50.05 21.2 h2.5 M51.3 19.95 v2.5" stroke="#00e000" stroke-width="1.35"/><path d="M53.35 21.2 h2.5 M54.6 19.95 v2.5" stroke="#00e000" stroke-width="1.35"/><path d="M56.65 21.2 h2.5 M57.9 19.95 v2.5" stroke="#00e000" stroke-width="1.35"/><path d="M59.95 21.2 h2.5 M61.2 19.95 v2.5" stroke="#00e000" stroke-width="1.35"/><path d="M63.25 21.2 h2.5 M64.5 19.95 v2.5" stroke="#00e000" stroke-width="1.35"/><path d="M66.55 21.2 h2.5 M67.8 19.95 v2.5" stroke="#00e000" stroke-width="1.35"/><path d="M43.45 41.5 h2.5 M44.7 40.25 v2.5" stroke="#00e000" stroke-width="1.35"/><path d="M46.75 41.5 h2.5 M48 40.25 v2.5" stroke="#00e000" stroke-width="1.35"/><path d="M50.05 41.5 h2.5 M51.3 40.25 v2.5" stroke="#00e000" stroke-width="1.35"/><path d="M59.95 41.5 h2.5 M61.2 40.25 v2.5" stroke="#00e000" stroke-width="1.35"/><path d="M63.25 41.5 h2.5 M64.5 40.25 v2.5" stroke="#00e000" stroke-width="1.35"/><path d="M66.55 41.5 h2.5 M67.8 40.25 v2.5" stroke="#00e000" stroke-width="1.35"/><path d="M83.25 21.2 h2.5 M84.5 19.95 v2.5" stroke="#f02800" stroke-width="1.35"/><path d="M83.25 41.5 h2.5 M84.5 40.25 v2.5" stroke="#f02800" stroke-width="1.35"/><path d="M86.55 21.2 h2.5 M87.8 19.95 v2.5" stroke="#f02800" stroke-width="1.35"/><path d="M86.55 41.5 h2.5 M87.8 40.25 v2.5" stroke="#f02800" stroke-width="1.35"/><path d="M89.85 21.2 h2.5 M91.1 19.95 v2.5" stroke="#f02800" stroke-width="1.35"/><path d="M89.85 41.5 h2.5 M91.1 40.25 v2.5" stroke="#f02800" stroke-width="1.35"/><path d="M93.15 21.2 h2.5 M94.4 19.95 v2.5" stroke="#f02800" stroke-width="1.35"/><path d="M93.15 41.5 h2.5 M94.4 40.25 v2.5" stroke="#f02800" stroke-width="1.35"/><path d="M96.45 21.2 h2.5 M97.7 19.95 v2.5" stroke="#f02800" stroke-width="1.35"/><path d="M96.45 41.5 h2.5 M97.7 40.25 v2.5" stroke="#f02800" stroke-width="1.35"/><path d="M99.75 21.2 h2.5 M101 19.95 v2.5" stroke="#f02800" stroke-width="1.35"/><path d="M99.75 41.5 h2.5 M101 40.25 v2.5" stroke="#f02800" stroke-width="1.35"/><path d="M103.05 21.2 h2.5 M104.3 19.95 v2.5" stroke="#f02800" stroke-width="1.35"/><path d="M103.05 41.5 h2.5 M104.3 40.25 v2.5" stroke="#f02800" stroke-width="1.35"/><path d="M106.35 21.2 h2.5 M107.6 19.95 v2.5" stroke="#f02800" stroke-width="1.35"/><path d="M106.35 41.5 h2.5 M107.6 40.25 v2.5" stroke="#f02800" stroke-width="1.35"/></svg>
<div id="grid" class="a">
<div class="a" style="left:0;top:0;width:1131px;height:1px;background:#a0a0a0"></div>
<div class="a" style="left:0;top:0;width:1px;height:325px;background:#a0a0a0"></div>
<div class="a" style="left:1px;top:1px;width:1130px;height:1px;background:#696969"></div>
<div class="a" style="left:1px;top:1px;width:1px;height:324px;background:#696969"></div>
<div class="gh" style="left:2px;width:101px"><div class="t" style="left:4px;top:2px">Centrála</div></div>
<div class="gh" style="left:103px;width:925px"><div class="t" style="left:4px;top:2px">Stručný popis jednotky</div></div>
<div class="gh" style="left:1028px;width:101px"><div class="t s915" style="left:4px;top:2px">Objednací číslo</div></div>
<div class="row" style="top:21px">
<div class="c" style="left:0;width:100px"><div class="t s92" style="left:5px">CP-1000</div></div>
<div class="c" style="left:101px;width:924px"><div class="t s897" style="left:2px">řada K, 192kB+64kB RAM, SCH, ETH, webserver, vnitřní periferie 4x DI/AI, 2xDO, 2xAO</div></div>
<div class="c" style="left:1026px;width:100px"><div class="t s93" style="left:3px">TXN 110 00</div></div>
</div>
<div class="row" style="top:40px">
<div class="c" style="left:0;width:100px"><div class="t s92" style="left:5px">CP-1001</div></div>
<div class="c" style="left:101px;width:924px"><div class="t s897" style="left:2px">řada L, 384kB+192kB RAM, SCH, ETH, webserver, vnitřní periferie 4x DI/AI, 2xDO, 2xAO</div></div>
<div class="c" style="left:1026px;width:100px"><div class="t s93" style="left:3px">TXN 110 01</div></div>
</div>
<div class="row" style="top:59px">
<div class="c" style="left:0;width:100px"><div class="t s92" style="left:5px">CP-1003</div></div>
<div class="c" style="left:101px;width:924px"><div class="t s897" style="left:2px">řada L, 384kB+192kB RAM, SCH, ETH, webserver, vnitřní periferie 8x DI/AI, 8xDI, 12xDO, 4xAO, 4xPWM, HSC/IRC</div></div>
<div class="c" style="left:1026px;width:100px"><div class="t s93" style="left:3px">TXN 110 03</div></div>
</div>
<div class="row" style="top:78px">
<div class="c" style="left:0;width:100px"><div class="t s92" style="left:5px">CP-1004</div></div>
<div class="c" style="left:101px;width:924px"><div class="t s897" style="left:2px">řada K, 192kB+64kB RAM, SCH, ETH, webserver, vnitřní periferie 8xDI, 6xDO, 4xAI, IRC, CNTR</div></div>
<div class="c" style="left:1026px;width:100px"><div class="t s93" style="left:3px">TXN 110 04</div></div>
</div>
<div class="row" style="top:97px">
<div class="c" style="left:0;width:100px"><div class="t s92" style="left:5px">CP-1005</div></div>
<div class="c" style="left:101px;width:924px"><div class="t s897" style="left:2px">řada K, 192kB+64kB RAM, SCH, ETH, webserver, vnitřní periferie 6xDI/AI, 2xAO, 6xDO</div></div>
<div class="c" style="left:1026px;width:100px"><div class="t s93" style="left:3px">TXN 110 05</div></div>
</div>
<div class="row" style="top:116px">
<div class="c" style="left:0;width:100px"><div class="t s92" style="left:5px">CP-1006</div></div>
<div class="c" style="left:101px;width:924px"><div class="t s897" style="left:2px">řada K, 192kB+64kB RAM, SCH, ETH, webserver, vnitřní periferie 13x DI/AI, 2x DI, 12x DO, 2x AO, CNTR</div></div>
<div class="c" style="left:1026px;width:100px"><div class="t s93" style="left:3px">TXN 110 06</div></div>
</div>
<div class="row" style="top:135px">
<div class="c" style="left:0;width:100px"><div class="t s92" style="left:5px">CP-1008</div></div>
<div class="c" style="left:101px;width:924px"><div class="t s897" style="left:2px">řada K, 192kB+64kB RAM, SCH, ETH, webserver, vnitřní periferie 10xDI/AI, 1xDI, 2xAI, 1xTI, 11xDO, 4xAO</div></div>
<div class="c" style="left:1026px;width:100px"><div class="t s93" style="left:3px">TXN 110 08</div></div>
</div>
<div class="row" style="top:154px">
<div class="c" style="left:0;width:100px"><div class="t s92" style="left:5px">CP-1013</div></div>
<div class="c" style="left:101px;width:924px"><div class="t s897" style="left:2px">řada L, 384kB+192kB RAM, SCH, ETH, webserver, vnitřní periferie 8x DI/AI, 8xDI, 12xDO, 4xAO, 4xPWM, HSC/IRC, displej 4x20, 6 tlačítek</div></div>
<div class="c" style="left:1026px;width:100px"><div class="t s93" style="left:3px">TXN 110 13</div></div>
</div>
<div class="row" style="top:173px">
<div class="c" style="left:0;width:100px"><div class="t s92" style="left:5px">CP-1014</div></div>
<div class="c" style="left:101px;width:924px"><div class="t s897" style="left:2px">řada K, 192kB+64kB RAM, SCH, ETH, webserver, vnitřní periferie 8xDI, 6xDO, 4xAI, IRC, CNTR, displej 4x20, 6 tlačítek</div></div>
<div class="c" style="left:1026px;width:100px"><div class="t s93" style="left:3px">TXN 110 14</div></div>
</div>
<div class="row sel" style="top:192px">
<div class="c" style="left:0;width:100px"><div class="t s92" style="left:5px">CP-1015</div></div>
<div class="c" style="left:101px;width:924px"><div class="t s897" style="left:2px">řada K, 192kB+64kB RAM, SCH, ETH, webserver, vnitřní periferie 6xDI/AI, 2xAO, 6xDO, displej 4x20, 6 tlačítek</div></div>
<div class="c" style="left:1026px;width:100px"><div class="t s93" style="left:3px">TXN 110 15</div></div>
</div>
<div class="row" style="top:211px">
<div class="c" style="left:0;width:100px"><div class="t s92" style="left:5px">CP-1016</div></div>
<div class="c" style="left:101px;width:924px"><div class="t s897" style="left:2px">řada K, 192kB+64kB RAM, SCH, ETH, webserver, vnitřní periferie 13x DI/AI, 2x DI, 12x DO, 2x AO, CNTR, displej 4x20, 6 tlačítek</div></div>
<div class="c" style="left:1026px;width:100px"><div class="t s93" style="left:3px">TXN 110 16</div></div>
</div>
<div class="row" style="top:230px">
<div class="c" style="left:0;width:100px"><div class="t s92" style="left:5px">CP-1018</div></div>
<div class="c" style="left:101px;width:924px"><div class="t s897" style="left:2px">řada K, 192kB+64kB RAM, SCH, ETH, webserver, vnitřní periferie 10xDI/AI, 1xDI, 2xAI, 1xTI, 11xDO, 4xAO, displej 4x20, 6 tlačítek</div></div>
<div class="c" style="left:1026px;width:100px"><div class="t s93" style="left:3px">TXN 110 18</div></div>
</div>
<div class="row" style="top:249px">
<div class="c" style="left:0;width:100px"><div class="t s92" style="left:5px">CP-1020</div></div>
<div class="c" style="left:101px;width:924px"><div class="t s897" style="left:2px">řada K, 192kB+64kB RAM, SCH, ETH, webserver, vnitřní periferie 4x DI/AI, 2xDO, 2xAO, Interní RF master</div></div>
<div class="c" style="left:1026px;width:100px"><div class="t s93" style="left:3px">TXN 110 20</div></div>
</div>
<div class="row" style="top:268px">
<div class="c" style="left:0;width:100px"><div class="t s92" style="left:5px">CP-1026</div></div>
<div class="c" style="left:101px;width:924px"><div class="t s897" style="left:2px">řada K, 192kB+64kB RAM, SCH, ETH, webserver, vnitřní periferie 13x DI/AI, 2x DI, 12x DO, 2x AO, CNTR, Interní RF master</div></div>
<div class="c" style="left:1026px;width:100px"><div class="t s93" style="left:3px">TXN 110 26</div></div>
</div>
<div class="row" style="top:287px">
<div class="c" style="left:0;width:100px"><div class="t s92" style="left:5px">CP-1028</div></div>
<div class="c" style="left:101px;width:924px"><div class="t s897" style="left:2px">řada K, 192kB+64kB RAM, SCH, ETH, webserver, vnitřní periferie 10xDI/AI, 1xDI, 2xAI, 1xTI, 11xDO, 4xAO, Interní RF master</div></div>
<div class="c" style="left:1026px;width:100px"><div class="t s93" style="left:3px">TXN 110 28</div></div>
</div>
<div class="row" style="top:306px">
<div class="c" style="left:0;width:100px"><div class="t s92" style="left:5px">CP-1036</div></div>
<div class="c" style="left:101px;width:924px"><div class="t s897" style="left:2px">řada K, 192kB+64kB RAM, SCH, ETH, webserver, vnitřní periferie 13x DI/AI, 2x DI, 12x DO, 2x AO, CNTR, displej 4x20, 6 tlačítek, Interní RF master</div></div>
<div class="c" style="left:1026px;width:100px"><div class="t s93" style="left:3px">TXN 110 36</div></div>
</div>
</div>
</body></html>
